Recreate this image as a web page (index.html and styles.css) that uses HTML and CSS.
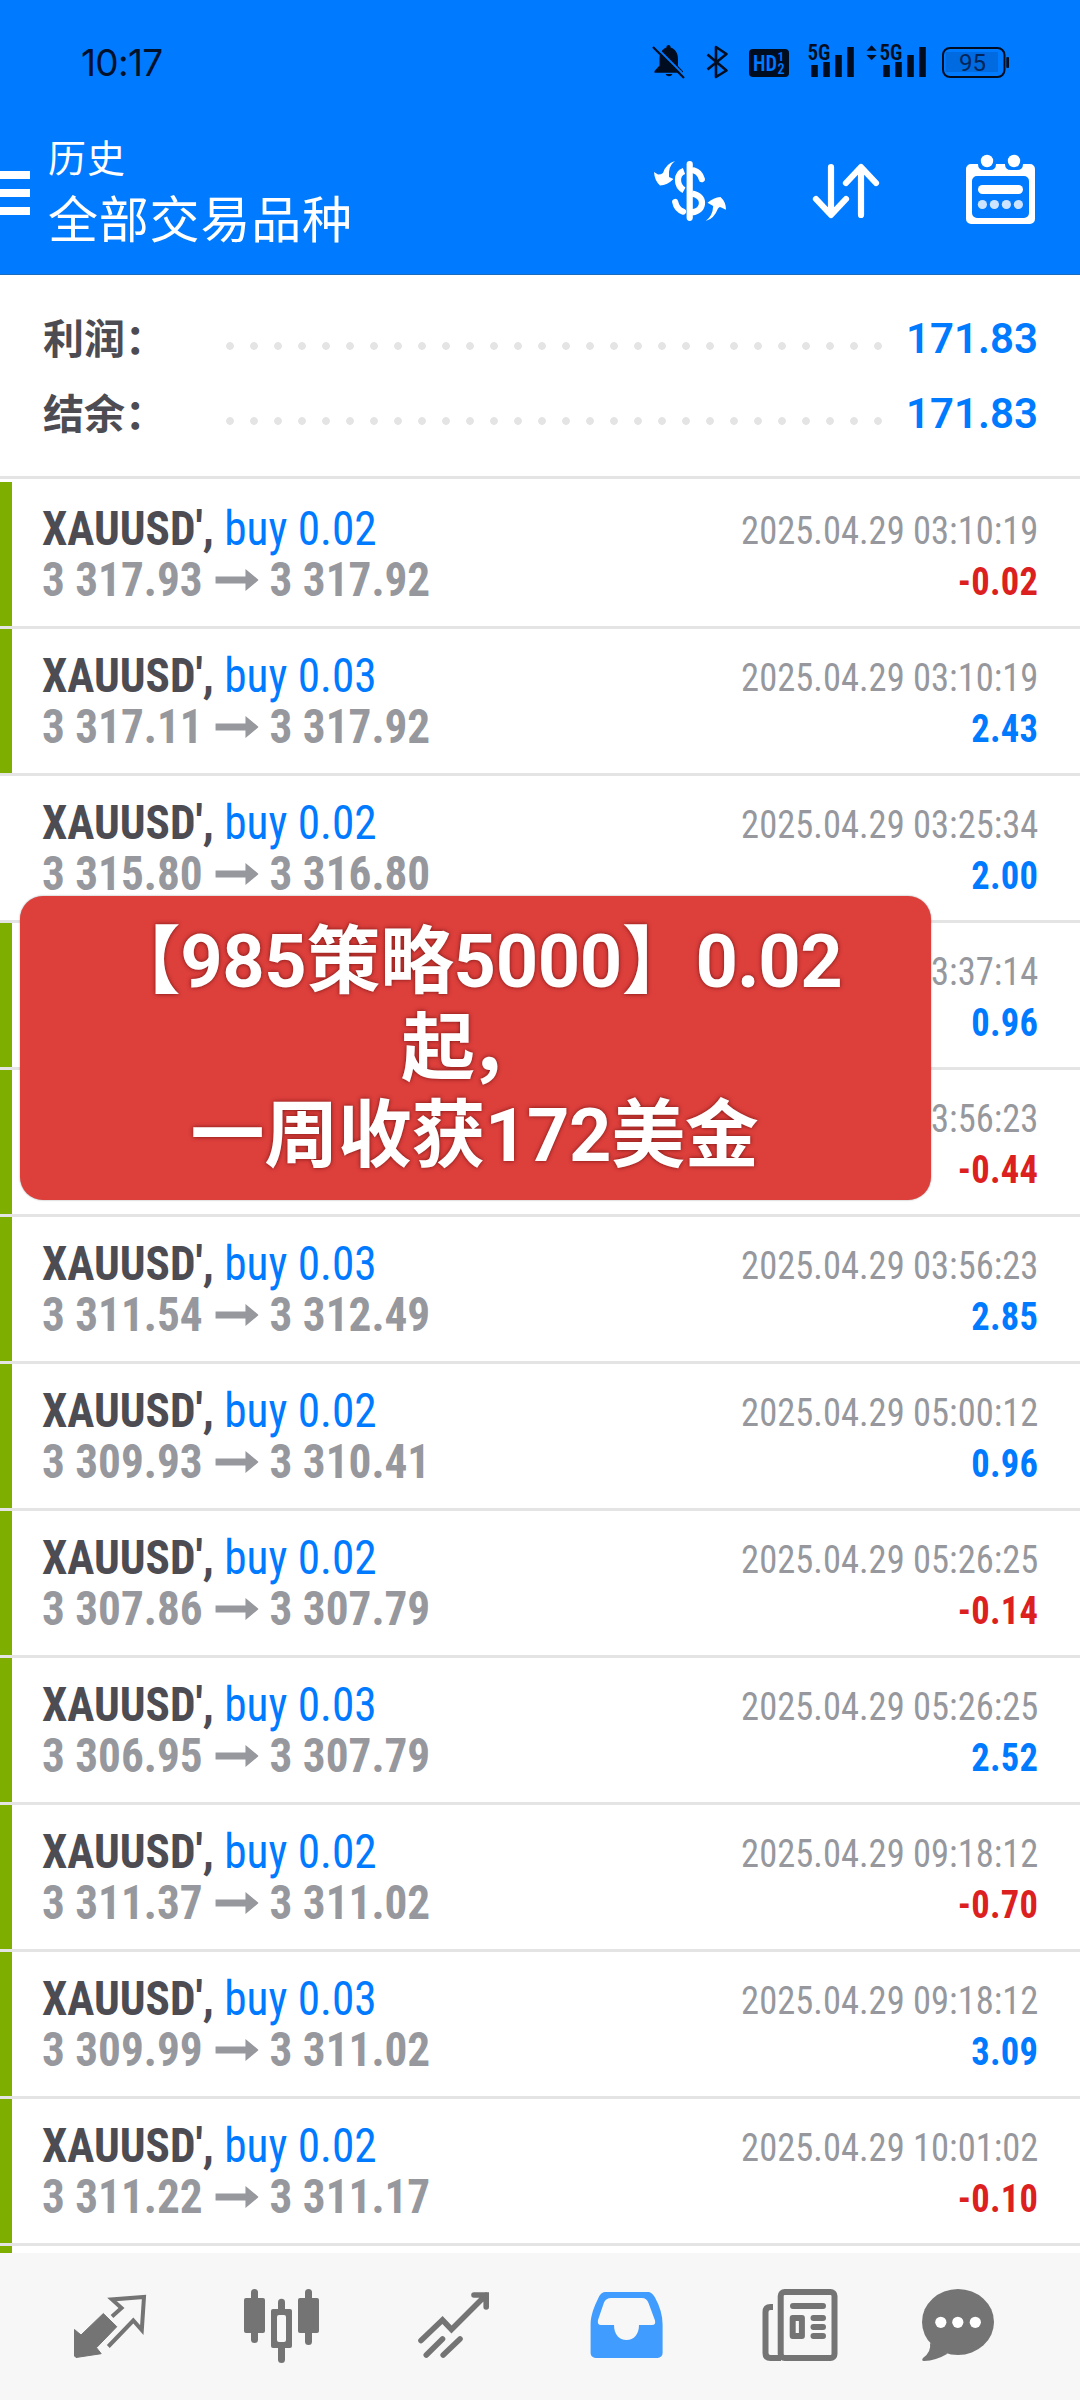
FILE: index.html
```html
<!DOCTYPE html>
<html lang="zh-CN">
<head>
<meta charset="utf-8">
<title>历史</title>
<link rel="stylesheet" href="styles.css">
</head>
<body>
<div class="app">
  <header class="header">
    <div class="status">
      <span class="clock">10:17</span>
      <svg class="status-icons" width="400" height="60" viewBox="620 30 400 60">
        <g fill="#000d20">
          <path d="M654.5 72.700v-1.700l5-5.500V59c0-6 3-10.500 7-11.500v-1q0-1.500 2-1.500t2 1.500v1c4.500 1 7.500 5.500 7.500 11.500v7l5 5.200v1.500zM665.500 74h7q-1 2.300-3.500 2.300t-3.500-2.300z"/>
          <path d="M654.200 45.200L685.500 76.500" stroke="#007aff" stroke-width="2"/>
          <path d="M653 47L684 78" stroke="#000d20" stroke-width="2.200"/>
          <path d="M707.500 54.500L726.500 70.500L716 77V47L726.500 54L707.500 69.500" fill="none" stroke="#000d20" stroke-width="2.600" stroke-linejoin="round"/>
          <rect x="749" y="49" width="40" height="28" rx="4"/>
          <path d="M811.300 65h6.500v12h-6.500zM823.300 62h6.500v15h-6.500zM835.300 55h6.500v22h-6.500zM847.300 47h6.500v30h-6.500zM883.300 65h6.500v12h-6.500zM895.300 62h6.500v15h-6.500zM907.300 55h6.500v22h-6.500zM919.300 47h6.500v30h-6.500z"/>
          <path d="M866.500 50.700l5.100-5.400 5.100 5.400zM866.500 54.900l5.100 5.400 5.100-5.400z"/>
          <rect x="945.500" y="52" width="52.500" height="20" fill="#006ae0"/>
          <rect x="943" y="48" width="61.500" height="29" rx="7" fill="none" stroke="#000d20" stroke-width="2"/>
          <rect x="1006.300" y="57" width="2.700" height="11" rx="1"/>
        </g>
        <g class="glyph">
          <text x="753" y="71" font-size="22.500" textLength="24" lengthAdjust="spacingAndGlyphs" fill="#007aff">HD</text>
          <text x="777.500" y="61" font-size="13" fill="#007aff">1</text>
          <text x="777.500" y="73.500" font-size="14" fill="#007aff">2</text>
          <text x="807.500" y="60" font-size="21.500" textLength="23" lengthAdjust="spacingAndGlyphs" fill="#000d20">5G</text>
          <text x="879.500" y="60" font-size="21.500" textLength="23" lengthAdjust="spacingAndGlyphs" fill="#000d20">5G</text>
          <text class="charge" x="959" y="71" font-size="24" fill="#00255a">95</text>
        </g>
      </svg>
    </div>
    <div class="toolbar">
      <div class="burger"><i></i><i></i><i></i></div>
      <div class="titles"><p class="sub">历史</p><p class="main">全部交易品种</p></div>
      <svg class="tools" width="400" height="80" viewBox="650 150 400 80" fill="none" stroke-linecap="round" stroke-linejoin="round">
        <g stroke="#fff" stroke-width="6.200">
          <path d="M689.700 164.200V217.800"/>
          <path d="M694 170.500c4 1 6.500 4 7.800 8.700M675.200 202c1 5 4 8.200 7.800 9.600"/>
          <path stroke-linecap="butt" d="M684 171c-4 1.500-6 5-6 9s2 8 6 10.200M692 193.500c7 1.500 10 5 10 9.500s-3 8.500-10 9.300"/>
          <path d="M831 167V214M816 199l15 16 15-16M861 215V168M846 183l15-16 15 16"/>
        </g>
        <path fill="#fff" d="M675 161q-7 5-6 16l4.500 2q-6 6-13.500 6.500-5.500-5-6-13.500l4 2.500q3 0 5-1.500 3-9.500 12-12zM705.700 221q7-5 7.500-15l-5.700-3.300q6-5 13-5.700 5.500 5 5.500 12.700l-6-2.700q-1 0-2 1.500-4 10.500-12.300 12.500z"/>
        <path fill="#fff" fill-rule="evenodd" d="M971 164h7q0 6 6 6h6q6 0 6-6h9q0 6 6 6h6q6 0 6-6h7a5 5 0 0 1 5 5v50a5 5 0 0 1-5 5H971a5 5 0 0 1-5-5v-50a5 5 0 0 1 5-5zM977 176a5 5 0 0 0-5 5v32a5 5 0 0 0 5 5h47a5 5 0 0 0 5-5v-32a5 5 0 0 0-5-5z"/>
        <g fill="#fff"><circle cx="987" cy="161" r="6.200"/><circle cx="1014" cy="161" r="6.200"/><rect x="978" y="185" width="45" height="9" rx="4.500"/></g>
        <g fill="#cce4ff"><circle cx="982.400" cy="204.500" r="4.600"/><circle cx="994.400" cy="204.500" r="4.600"/><circle cx="1006.400" cy="204.500" r="4.600"/><circle cx="1018.400" cy="204.500" r="4.600"/></g>
      </svg>
    </div>
  </header>

  <section class="summary">
    <div class="sum-row"><span class="label">利润：</span><span class="dots"></span><b>171.83</b></div>
    <div class="sum-row"><span class="label">结余：</span><span class="dots"></span><b>171.83</b></div>
  </section>

  <main class="deals" id="deals"></main>

  <nav class="nav">
    <svg viewBox="24 33 172 147">
      <path fill="#747474" stroke="#747474" stroke-linejoin="round" d="M74.500 109.500l6.500 5.500 22.300-21.500 13.500 13.200L96.500 127.700l4.700 6L76 137.500 74.500 136z"/>
      <path fill="none" stroke="#747474" stroke-width="4" d="M112 96.500l9.500-8.500-9.500-8.500L144 77 141.800 110l-8.500-9.500-25 26" stroke-linejoin="miter"/>
    </svg>
    <svg viewBox="196 33 172 147" fill="#747474">
      <rect x="244" y="78" width="21" height="35" rx="2"/><rect x="251" y="69" width="7" height="54" rx="3.500"/>
      <rect x="298" y="78" width="21" height="35" rx="2"/><rect x="305" y="69" width="7" height="56" rx="3.500"/>
      <rect x="271" y="89" width="21" height="39" rx="2"/><rect x="278" y="78.700" width="7" height="64.300" rx="3.500"/><rect x="277" y="95" width="9" height="27" rx="2" fill="#f7f7f7"/>
    </svg>
    <svg viewBox="368 33 172 147" fill="none" stroke="#747474" stroke-width="5.600" stroke-linecap="round">
      <path d="M421 120.500L442.500 100l9 9.500L486 75M474 75h12.200V87"/>
      <path d="M426.300 135L442.500 119M443.200 135L460 119"/>
    </svg>
    <svg viewBox="540 33 172 147">
      <path fill="#419cff" fill-rule="evenodd" d="M606 72h41c4 0 6 2 8 5.500 5 9 7.600 18 7.600 27V133a5 5 0 0 1-5 5H595.600a5 5 0 0 1-5-5V104.500c0-9 3.500-18 8-27 2-4 4-5.500 7.400-5.500zM611 78q-5 0-7 4.500L598 100q-1 5 3 5h13c0 9 5 15 12.500 15S639 114 639 105h13q4 0 3-4.500L648.500 83q-2-5-6.500-5z"/>
    </svg>
    <svg viewBox="712 33 172 147" fill="none" stroke="#747474" stroke-width="6">
      <rect x="780.700" y="72" width="53.800" height="66" rx="4"/>
      <path d="M773 87h-2.500q-5 0-5 5v41q0 5 5 5H781"/>
      <path d="M793 86h30M813.500 98h9.500M813.500 107h9.500M813.500 116h9.500" stroke-linecap="round"/>
      <rect x="792.700" y="98" width="9.200" height="18" stroke-linejoin="round"/>
    </svg>
    <svg viewBox="884 33 148 147">
      <ellipse cx="958" cy="102" rx="36" ry="33" fill="#747474"/>
      <path fill="#747474" d="M930 123q1.500 9-7 15-2 2.800 1 3 12-.5 23.500-7.300z"/>
      <g fill="#fff"><circle cx="940.800" cy="102.300" r="5.600"/><circle cx="957.800" cy="102.300" r="5.600"/><circle cx="975.300" cy="102.300" r="5.600"/></g>
    </svg>
  </nav>

  <div class="banner">【985策略5000】0<span class="dot">.</span>02<br>起<span class="comma">，</span><br>一周收获172美金</div>
</div>
<script src="deals.js"></script>
</body>
</html>
```
FILE: styles.css
```css
* { box-sizing: border-box; }
body { margin: 0; background: #fff; }
p { margin: 0; }

.app {
  position: relative;
  display: flex;
  flex-direction: column;
  width: 1080px;
  height: 2400px;
  overflow: hidden;
  font-family: Roboto, "Noto Sans CJK SC", sans-serif;
  font-stretch: 75%;
}

/* Header */
.header { height: 275px; background: #007aff; border-bottom: 1px solid #1a6dbd; flex: none; }
.status { display: flex; justify-content: space-between; padding: 30px 60px 0 81px; height: 130px; }
.clock { font: 400 37px/66px Inter, sans-serif; color: #00112c; letter-spacing: -.7px; }
.glyph text { font-family: Roboto, sans-serif; font-weight: 600; }
.glyph .charge { font-weight: 400; font-stretch: 100%; }
.toolbar { display: flex; height: 144px; }
.burger { display: flex; flex-direction: column; gap: 10px; width: 48px; padding-top: 41px; }
.burger i { width: 30px; height: 8px; background: #fff; }
.titles { flex: 1; margin-top: -2px; color: #fff; font-family: "Noto Sans CJK SC", sans-serif; }
.sub { font-size: 38px; line-height: 56px; letter-spacing: 1px; }
.main { font-size: 50px; line-height: 64px; letter-spacing: .8px; }
.tools { margin: 20px 30px 0 0; }

/* Totals */
.summary { height: 204px; padding: 26px 42px 0 43px; border-bottom: 3px solid #e4e4e4; flex: none; }
.sum-row { display: flex; align-items: center; height: 75px; }
.label { width: 175px; font: 700 41px/75px "Noto Sans CJK SC", sans-serif; color: #4d4c52; white-space: nowrap; margin-top: -4px; }
.dots {
  width: 672px;
  height: 8px;
  margin-top: 15px;
  background: radial-gradient(circle at 12px 4px, #e4e4e4 3.500px, transparent 4.200px) 0 0 / 24px 8px repeat-x;
}
.sum-row b { flex: 1; text-align: right; font-size: 42px; font-stretch: 100%; font-weight: 650; color: #007aff; }

/* Deals */
.deals { flex: 1; overflow: hidden; padding-top: 3px; }
.deal {
  display: flex;
  justify-content: space-between;
  height: 147px;
  padding: 0 42px 0 30px;
  border-left: 12px solid #7eae00;
  position: relative;
}
.deal.plain { border-left-color: transparent; }
.deal::after { content: ""; position: absolute; left: -12px; right: 0; bottom: 0; height: 3px; background: #e4e4e4; }
.deal p { white-space: nowrap; }
.left { padding-top: 21px; transform: scaleX(.942); transform-origin: left; }
.left p { font-size: 48px; line-height: 51px; font-weight: 700; }
.symbol { color: #4d4c52; }
.symbol span { color: #007aff; font-weight: 400; }
.prices { display: flex; align-items: center; color: #96989d; }
.prices svg { margin: 0 12px 0 13px; }
.right { padding-top: 23px; text-align: right; font-size: 39.500px; transform: scaleX(.925); transform-origin: right; }
.right p { line-height: 51px; }
.time { color: #96989d; }
.gain, .loss { font-weight: 700; color: #007aff; letter-spacing: .3px; }
.loss { color: #dc2020; }

/* Bottom navigation */
.nav { display: grid; grid-template-columns: repeat(5, 172px) 148px; height: 147px; padding-left: 24px; background: #f7f7f7; flex: none; }
.nav svg { width: 100%; height: 147px; }

/* Floating caption */
.banner {
  position: absolute;
  left: 20px;
  top: 896px;
  width: 911px;
  height: 304px;
  padding: 19px 2px 0 0;
  border-radius: 23px;
  background: #dd3f3b;
  box-shadow: 0 0 2px rgba(0, 0, 0, .4);
  color: #fff;
  font: 700 74px/87px Roboto, "Noto Sans CJK SC", sans-serif;
  letter-spacing: -.4px;
  text-align: center;
  text-shadow: 0 0 4px rgba(70, 0, 0, .7);
}
.dot { font-family: "Open Sans", sans-serif; }
.comma { margin: 0 6px 0 -6px; }
```
FILE: deals.js
```js
const deals = [
  ["0.02", "3 317.93", "3 317.92", "03:10:19", "-0.02"],
  ["0.03", "3 317.11", "3 317.92", "03:10:19", "2.43"],
  ["0.02", "3 315.80", "3 316.80", "03:25:34", "2.00", "plain"],
  ["0.02", "3 316.32", "3 316.80", "03:37:14", "0.96"],
  ["0.02", "3 312.71", "3 312.49", "03:56:23", "-0.44"],
  ["0.03", "3 311.54", "3 312.49", "03:56:23", "2.85"],
  ["0.02", "3 309.93", "3 310.41", "05:00:12", "0.96"],
  ["0.02", "3 307.86", "3 307.79", "05:26:25", "-0.14"],
  ["0.03", "3 306.95", "3 307.79", "05:26:25", "2.52"],
  ["0.02", "3 311.37", "3 311.02", "09:18:12", "-0.70"],
  ["0.03", "3 309.99", "3 311.02", "09:18:12", "3.09"],
  ["0.02", "3 311.22", "3 311.17", "10:01:02", "-0.10"]
];
const arrow = '<svg width="46" height="22" viewBox="0 0 46 22"><path fill="#96989d" d="M0 7.500h32V0l14 11-14 11v-7.500H0z"/></svg>';
document.getElementById("deals").innerHTML = deals.map(([lot, open, close, time, profit, kind = ""]) => `
  <article class="deal ${kind}">
    <div class="left">
      <p class="symbol">XAUUSD', <span>buy ${lot}</span></p>
      <p class="prices">${open}${arrow}${close}</p>
    </div>
    <div class="right">
      <p class="time">2025.04.29 ${time}</p>
      <p class="${profit < 0 ? "loss" : "gain"}">${profit}</p>
    </div>
  </article>`).join("") + '<article class="deal"></article>';
```
